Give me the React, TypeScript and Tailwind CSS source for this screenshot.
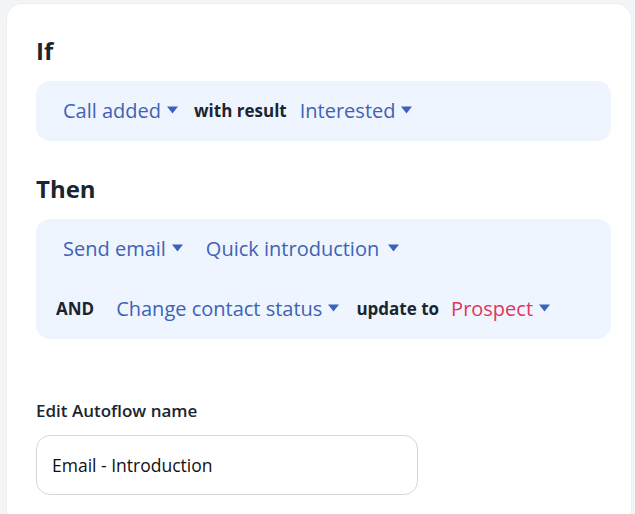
import { ReactNode } from 'react';

const Caret = () => (
  <svg width="11" height="8" viewBox="0 0 11 8" className="shrink-0 -mt-[3px]">
    <path d="M0 0.5h11L5.5 7.5z" fill="#3b62bf" />
  </svg>
);

// dropdown-looking token inside a rule box
const Pick = ({ children, red, className = '' }: { children: ReactNode; red?: boolean; className?: string }) => (
  <span className={`flex items-center gap-[6px] text-[20px] ${red ? 'text-[#e03660]' : 'text-[#3f62b6]'} ${className}`}>
    {children}
    <Caret />
  </span>
);

const Word = ({ children, className = '' }: { children: ReactNode; className?: string }) => (
  <span className={`text-[17px] font-bold text-[#1b2530] ${className}`}>{children}</span>
);

export default function App() {
  return (
    <div className="min-h-[514px] bg-[#f3f4f6] pl-[6px] pr-[3px] pt-[3px] overflow-hidden" style={{ fontFamily: '"Open Sans", sans-serif' }}>
      <div className="bg-white rounded-t-[16px] h-[520px] pl-[29px] pr-[20px] pt-[31px] border border-[#eceef1] border-b-0">
        <h2 className="text-[24px] leading-[32px] font-bold text-[#1b2530]">If</h2>
        <div className="mt-[14px] h-[60px] rounded-[14px] bg-[#eef5fe] flex items-center px-[27px]">
          <Pick>Call added</Pick>
          <Word className="ml-[16px]">with result</Word>
          <Pick className="ml-[13px]">Interested</Pick>
        </div>

        <h2 className="mt-[32px] text-[24px] leading-[32px] font-bold text-[#1b2530]">Then</h2>
        <div className="mt-[14px] rounded-[14px] bg-[#eef5fe] px-[20px]">
          <div className="h-[60px] flex items-center pl-[7px]">
            <Pick>Send email</Pick>
            <Pick className="ml-[23px] gap-[9px]">Quick introduction</Pick>
          </div>
          <div className="h-[60px] flex items-center">
            <Word>AND</Word>
            <Pick className="ml-[22px]">Change contact status</Pick>
            <Word className="ml-[17px]">update to</Word>
            <Pick red className="ml-[12px]">Prospect</Pick>
          </div>
        </div>

        <div className="mt-[60px] text-[17px] font-semibold text-[#1b2530] leading-[24px]">Edit Autoflow name</div>
        <input
          className="mt-[12px] w-[382px] h-[60px] rounded-[14px] border border-[#d3d7dc] px-[15px] text-[17.5px] text-[#111] outline-none"
          defaultValue="Email - Introduction"
        />
      </div>
    </div>
  );
}
